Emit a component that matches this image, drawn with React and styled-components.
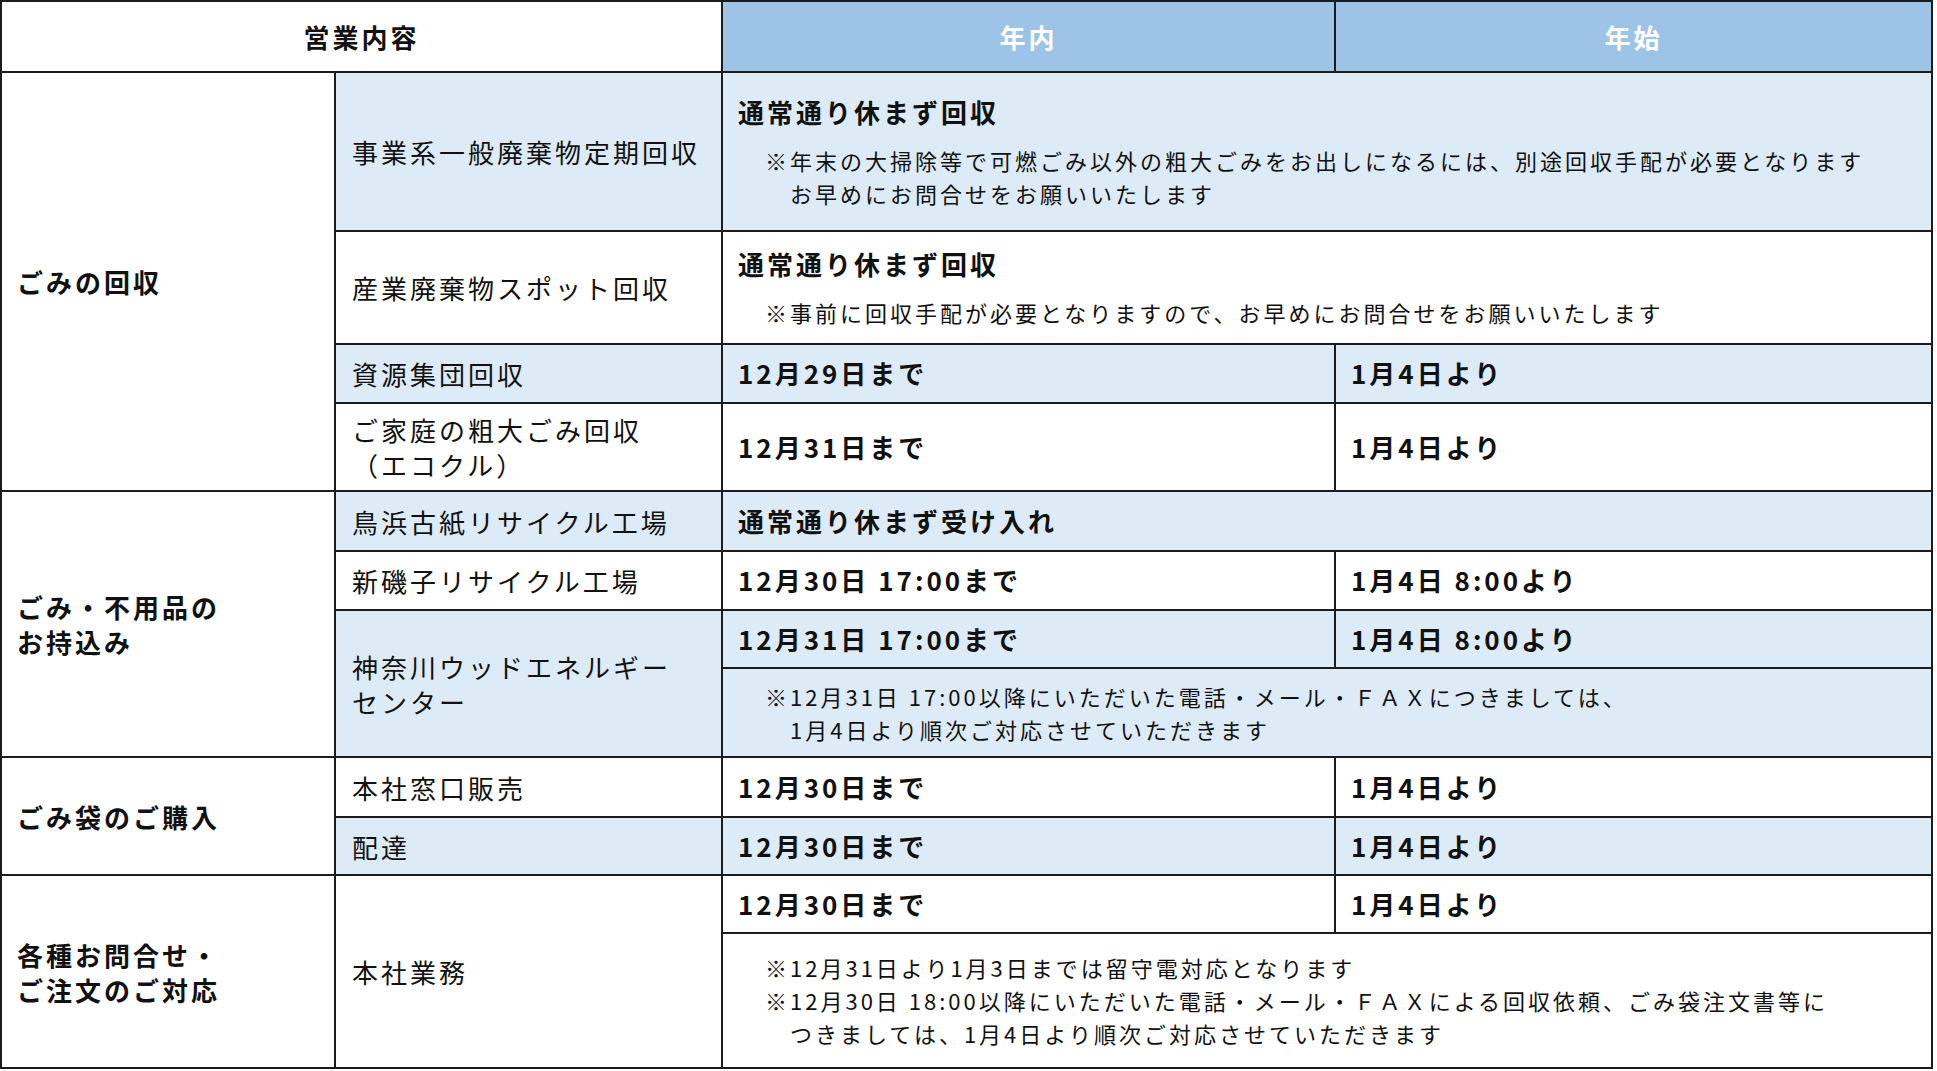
import React from "react";
import styled, { createGlobalStyle } from "styled-components";

const GlobalStyle = createGlobalStyle`
  body {
    margin: 0;
    background: #fff;
    color: #111;
    font-family: "Noto Sans CJK JP", "Noto Sans", sans-serif;
  }
`;

const tones = {
  head: "#9dc3e6",
  blue: "#ddebf7",
  white: "#fff",
};

const Table = styled.div`
  display: grid;
  width: 1933px;
  box-sizing: border-box;
  grid-template-columns: 332px 385px 611px 595px;
  grid-template-rows: 69px 157px 111px 57px 86px 58px 57px 56px 87px 58px 56px 56px 133px;
  gap: 2px;
  padding: 2px;
  background: #1c1c1c;
`;

const Cell = styled.div`
  grid-column: ${(p) => p.$col};
  grid-row: ${(p) => p.$row};
  background: ${(p) => tones[p.$tone || "white"]};
  display: flex;
  flex-direction: column;
  justify-content: center;
  padding: 0 14px 0 16px;
  font-size: 26px;
  letter-spacing: 3px;
  line-height: 35px;
  white-space: nowrap;
`;

const HeadCell = styled(Cell)`
  align-items: center;
  padding: 0;
  font-weight: 700;
  color: ${(p) => (p.$tone === "head" ? "#fff" : "#111")};
`;

const GroupCell = styled(Cell)`
  font-weight: 700;
  padding-left: 15px;
`;

const ItemCell = styled(Cell)`
  font-weight: 400;
`;

const DateCell = styled(Cell)`
  font-weight: 700;
  padding-left: 15px;
  padding-bottom: 2px;
`;

const NoticeCell = styled(Cell)`
  padding-left: 15px;
`;

const Title = styled.div`
  font-weight: 700;
  font-size: 26px;
  line-height: 36px;
  & + div {
    margin-top: 14px;
  }
`;

const NoteLine = styled.div`
  font-size: 22px;
  letter-spacing: 3px;
  line-height: 33px;
  padding-left: ${(p) => (p.$indent ? 52 : 27)}px;
`;

const Notes = ({ lines }) => (
  <div>
    {lines.map((l, i) => (
      <NoteLine key={i} $indent={l.startsWith("　")}>
        {l.replace(/^　/, "")}
      </NoteLine>
    ))}
  </div>
);

export default function App() {
  return (
    <>
      <GlobalStyle />
      <Table>
        <HeadCell $col="1 / 3" $row="1">営業内容</HeadCell>
        <HeadCell $col="3" $row="1" $tone="head">年内</HeadCell>
        <HeadCell $col="4" $row="1" $tone="head">年始</HeadCell>

        {/* ごみの回収 */}
        <GroupCell $col="1" $row="2 / 6">ごみの回収</GroupCell>
        <ItemCell $col="2" $row="2" $tone="blue">事業系一般廃棄物定期回収</ItemCell>
        <NoticeCell $col="3 / 5" $row="2" $tone="blue">
          <Title>通常通り休まず回収</Title>
          <Notes
            lines={[
              "※年末の大掃除等で可燃ごみ以外の粗大ごみをお出しになるには、別途回収手配が必要となります",
              "　お早めにお問合せをお願いいたします",
            ]}
          />
        </NoticeCell>

        <ItemCell $col="2" $row="3">産業廃棄物スポット回収</ItemCell>
        <NoticeCell $col="3 / 5" $row="3">
          <Title>通常通り休まず回収</Title>
          <Notes lines={["※事前に回収手配が必要となりますので、お早めにお問合せをお願いいたします"]} />
        </NoticeCell>

        <ItemCell $col="2" $row="4" $tone="blue">資源集団回収</ItemCell>
        <DateCell $col="3" $row="4" $tone="blue">12月29日まで</DateCell>
        <DateCell $col="4" $row="4" $tone="blue">1月4日より</DateCell>

        <ItemCell $col="2" $row="5">
          ご家庭の粗大ごみ回収
          <br />
          （エコクル）
        </ItemCell>
        <DateCell $col="3" $row="5">12月31日まで</DateCell>
        <DateCell $col="4" $row="5">1月4日より</DateCell>

        {/* お持込み */}
        <GroupCell $col="1" $row="6 / 10">
          ごみ・不用品の
          <br />
          お持込み
        </GroupCell>
        <ItemCell $col="2" $row="6" $tone="blue">鳥浜古紙リサイクル工場</ItemCell>
        <DateCell $col="3 / 5" $row="6" $tone="blue">通常通り休まず受け入れ</DateCell>

        <ItemCell $col="2" $row="7">新磯子リサイクル工場</ItemCell>
        <DateCell $col="3" $row="7">12月30日 17:00まで</DateCell>
        <DateCell $col="4" $row="7">1月4日 8:00より</DateCell>

        <ItemCell $col="2" $row="8 / 10" $tone="blue">
          神奈川ウッドエネルギー
          <br />
          センター
        </ItemCell>
        <DateCell $col="3" $row="8" $tone="blue">12月31日 17:00まで</DateCell>
        <DateCell $col="4" $row="8" $tone="blue">1月4日 8:00より</DateCell>
        <NoticeCell $col="3 / 5" $row="9" $tone="blue">
          <Notes
            lines={[
              "※12月31日 17:00以降にいただいた電話・メール・ＦＡＸにつきましては、",
              "　1月4日より順次ご対応させていただきます",
            ]}
          />
        </NoticeCell>

        {/* ごみ袋 */}
        <GroupCell $col="1" $row="10 / 12">ごみ袋のご購入</GroupCell>
        <ItemCell $col="2" $row="10">本社窓口販売</ItemCell>
        <DateCell $col="3" $row="10">12月30日まで</DateCell>
        <DateCell $col="4" $row="10">1月4日より</DateCell>

        <ItemCell $col="2" $row="11" $tone="blue">配達</ItemCell>
        <DateCell $col="3" $row="11" $tone="blue">12月30日まで</DateCell>
        <DateCell $col="4" $row="11" $tone="blue">1月4日より</DateCell>

        {/* お問合せ */}
        <GroupCell $col="1" $row="12 / 14">
          各種お問合せ・
          <br />
          ご注文のご対応
        </GroupCell>
        <ItemCell $col="2" $row="12 / 14">本社業務</ItemCell>
        <DateCell $col="3" $row="12">12月30日まで</DateCell>
        <DateCell $col="4" $row="12">1月4日より</DateCell>
        <NoticeCell $col="3 / 5" $row="13">
          <Notes
            lines={[
              "※12月31日より1月3日までは留守電対応となります",
              "※12月30日 18:00以降にいただいた電話・メール・ＦＡＸによる回収依頼、ごみ袋注文書等に",
              "　つきましては、1月4日より順次ご対応させていただきます",
            ]}
          />
        </NoticeCell>
      </Table>
    </>
  );
}
